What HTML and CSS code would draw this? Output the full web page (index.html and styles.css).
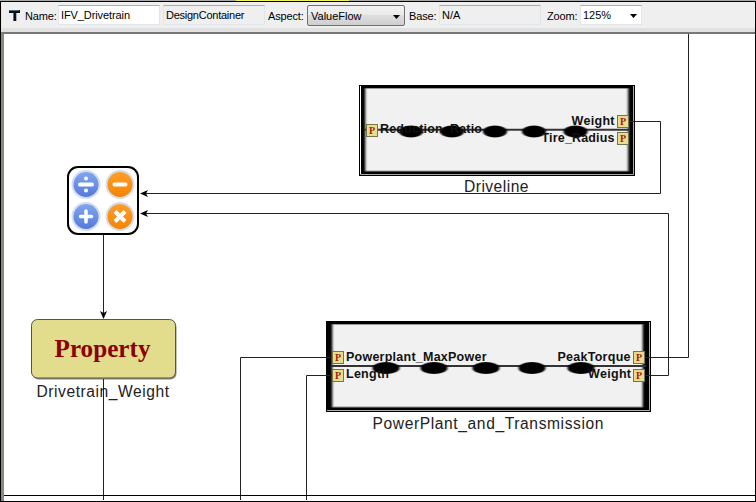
FILE: index.html
```html
<!DOCTYPE html>
<html lang="en">
<head>
<meta charset="utf-8">
<title>IFV_Drivetrain</title>
<link rel="stylesheet" href="styles.css">
</head>
<body>
<div class="tabstrip"><div class="tab-active"></div></div>
<div class="window">
  <header class="toolbar">
    <svg class="logo" width="13" height="13" viewBox="0 0 13 13"><path d="M1 1H12V4H8.300V12H5V4H1Z" fill="#071020"/><path d="M1 1.500H11" stroke="#477079"/><path d="M5.500 4V12" stroke="#59698a"/></svg>
    <span class="label label-name">Name:</span>
    <div class="field field-name"><span class="t-name">IFV_Drivetrain</span></div>
    <div class="field field-kind readonly"><span class="t-kind">DesignContainer</span></div>
    <span class="label label-aspect">Aspect:</span>
    <div class="select"><span class="t-flow">ValueFlow</span><i class="arrow"></i></div>
    <span class="label label-base">Base:</span>
    <div class="field field-base readonly"><span>N/A</span></div>
    <span class="label label-zoom">Zoom:</span>
    <div class="field field-zoom"><span>125%</span><i class="arrow"></i></div>
  </header>
  <main class="canvas">
    <svg class="diagram" width="751" height="466" viewBox="4 34 751 466">
      <defs>
        <filter id="soft" x="-10%" y="-30%" width="120%" height="160%"><feGaussianBlur stdDeviation="1.100 0.600"/></filter>
        <filter id="edge" x="-5%" y="-5%" width="110%" height="110%"><feGaussianBlur stdDeviation="1.200 0.500"/></filter>
        <linearGradient id="blue" x2="0" y2="1"><stop stop-color="#82a8ef"/><stop offset="1" stop-color="#5278dc"/></linearGradient>
        <linearGradient id="orange" x2="0" y2="1"><stop stop-color="#ffa02c"/><stop offset="1" stop-color="#f58200"/></linearGradient>
        <g id="port"><rect x=".5" y=".5" width="11" height="12" fill="#e5df8b" stroke="#77734d"/><text class="p" x="6" y="10.300">P</text></g>
      </defs>

      <rect x="359" y="85" width="276" height="91"/>
      <path d="M360.500 86V174.500H633.500V86" class="rim"/>
      <path d="M360.500 86V174" class="rim-light"/>
      <rect x="361" y="86" width="272" height="88"/>
      <rect x="365.500" y="88.500" width="262.500" height="82.500" class="panel" filter="url(#edge)"/>
      <path d="M364 129.700H630" class="shaft"/>
      <g filter="url(#soft)">
        <ellipse cx="411" cy="131.500" rx="12" ry="6"/><ellipse cx="452" cy="131.500" rx="12" ry="6"/><ellipse cx="495" cy="131.500" rx="12" ry="6"/><ellipse cx="534" cy="131.500" rx="12" ry="6"/><ellipse cx="575.500" cy="131.500" rx="12" ry="6"/>
      </g>
      <text class="pin" x="380" y="133" textLength="102">Reduction_Ratio</text>
      <text class="pin" x="571.500" y="125" textLength="43">Weight</text>
      <text class="pin" x="541.500" y="142" textLength="73">Tire_Radius</text>
      <text class="caption" x="464" y="192" textLength="64.500">Driveline</text>

      <rect x="326" y="321" width="325" height="91"/>
      <path d="M327 410.500H649.500V322" class="rim"/>
      <rect x="327" y="322" width="322" height="88"/>
      <rect x="332.500" y="324.500" width="310" height="82.500" class="panel" filter="url(#edge)"/>
      <path d="M331 366H646" class="shaft"/>
      <g filter="url(#soft)">
        <ellipse cx="386" cy="368" rx="13.500" ry="6"/><ellipse cx="434" cy="368" rx="13.500" ry="6"/><ellipse cx="486" cy="368" rx="13.500" ry="6"/><ellipse cx="532" cy="368" rx="13.500" ry="6"/><ellipse cx="581" cy="368" rx="13.500" ry="6"/>
      </g>
      <text class="pin" x="346" y="361" textLength="140.500">Powerplant_MaxPower</text>
      <text class="pin" x="346" y="378" textLength="43">Length</text>
      <text class="pin" x="557.500" y="361" textLength="73">PeakTorque</text>
      <text class="pin" x="588" y="378" textLength="43">Weight</text>
      <text class="caption" x="372.500" y="428.500" textLength="231">PowerPlant_and_Transmission</text>

      <rect x="68" y="167" width="70" height="67" rx="10" fill="#fff" stroke="#000" stroke-width="2"/>
      <g stroke="#d5dded">
        <circle cx="86" cy="184.500" r="13.500" fill="url(#blue)" stroke-width="2"/>
        <circle cx="86" cy="216.500" r="13.500" fill="url(#blue)" stroke-width="2"/>
        <circle cx="120" cy="184.500" r="13.500" fill="url(#orange)" stroke-width="2"/>
        <circle cx="120" cy="216.500" r="13.500" fill="url(#orange)" stroke-width="2"/>
      </g>
      <path d="M80 184.500H92M114.500 184.500H125.500" stroke="#fff" stroke-width="4" stroke-linecap="round"/>
      <circle cx="86" cy="178.500" r="2" fill="#fff"/><circle cx="86" cy="190.500" r="2" fill="#fff"/>
      <path d="M80.500 216.500H91.500M86 211V222" stroke="#fff" stroke-width="3.500" stroke-linecap="round"/>
      <path d="M115 211.500L125 221.500M125 211.500L115 221.500" stroke="#fff" stroke-width="4"/>

      <rect x="32.500" y="321" width="144" height="58.500" rx="6" fill="#8d8a73"/>
      <rect x="31.500" y="319.500" width="144" height="58.500" rx="6" fill="#e2dc8d" stroke="#555445"/>
      <text class="property" x="54.500" y="357" textLength="96" lengthAdjust="spacingAndGlyphs">Property</text>
      <text class="caption" x="36.500" y="397" textLength="132.500">Drivetrain_Weight</text>

      <g class="wire">
        <path d="M628 121.500H660.500V193.500H146"/>
        <path d="M644 375.500H668.500V213.500H146"/>
        <path d="M644 357.500H688.500V34"/>
        <path d="M332 357.500H240.500V500"/>
        <path d="M332 375.500H306.500V500"/>
        <path d="M103.500 235V313M103.500 379V500"/>
      </g>
      <path d="M140 193.500L148 190L146 193.500L148 197ZM140 213.500L148 210L146 213.500L148 217ZM103.500 319L100 311L103.500 313L107 311Z"/>
      <use href="#port" x="366" y="124"/><use href="#port" x="617" y="115"/><use href="#port" x="617" y="132"/>
      <use href="#port" x="332" y="351"/><use href="#port" x="332" y="369"/><use href="#port" x="633" y="351"/><use href="#port" x="633" y="369"/>
    </svg>
  </main>
</div>
</body>
</html>
```
FILE: styles.css
```css
* { box-sizing: border-box; }
body {
  margin: 0;
  width: 756px;
  height: 502px;
  overflow: hidden;
  background: #fff;
  color: #000;
  font: 11px/14px "Liberation Sans", sans-serif;
}
.tabstrip { height: 1px; padding-left: 236px; background: #aaa; }
.tab-active { width: 113px; height: 1px; background: #f4f45b; }
.window {
  height: 501px;
  border: 1px solid #000;
  display: flex;
  flex-direction: column;
}
.toolbar {
  display: flex;
  align-items: flex-start;
  height: 30px;
  padding: 3px 0 0 6px;
  background: #efefef;
  border-bottom: 4px solid #e1e1e1;
  border-left: 1px solid #eeee9b;
  white-space: nowrap;
}
.logo { margin-top: 4px; }
.label { margin-top: 4px; letter-spacing: -0.15px; }
.label-name { width: 31px; margin-left: 4px; }
.label-aspect { width: 36px; margin-left: 3px; }
.label-base { width: 28px; margin-left: 4px; }
.label-zoom { width: 31px; margin-left: 6px; }
.field {
  display: flex;
  justify-content: space-between;
  height: 20px;
  padding: 2px 2px 0;
  background: #fff;
  border: 1px solid #e0e4eb;
  border-top-color: #abadb3;
}
.field-name { width: 102px; margin-left: 2px; }
.field-kind { width: 102px; margin-left: 3px; }
.field-base { width: 102px; margin-left: 2px; }
.field-zoom { width: 62px; margin-left: 2px; padding-right: 4px; }
.t-name { letter-spacing: -0.1px; }
.t-kind { letter-spacing: -0.25px; }
.readonly { background: #efefef; }
.select {
  display: flex;
  justify-content: space-between;
  width: 98px;
  height: 21px;
  margin-left: 3px;
  padding: 3px 4px 0 3px;
  border: 1px solid #707070;
  border-radius: 2px;
  background: linear-gradient(#f2f2f2, #ebebeb 45%, #dddddd 50%, #cfcfcf);
}
.arrow {
  width: 7px;
  height: 4px;
  margin-top: 6px;
  background: #000;
  clip-path: polygon(0 0, 100% 0, 50% 100%);
}
.canvas {
  position: relative;
  flex: 1;
  border-top: 2px solid #777;
  border-left: 3px solid #8a897b;
  border-left-color: #8a8980;
  min-height: 0;
  overflow: hidden;
}
.canvas::after {
  content: "";
  position: absolute;
  left: 0;
  right: 0;
  top: 461px;
  height: 1px;
  background: #000;
}
.diagram { display: block; }
.rim { fill: none; stroke: #aaa; }
.rim-light { stroke: #fff; }
.panel { fill: #f1f1f1; stroke: #999; stroke-width: 1; }
.shaft { stroke: #333; stroke-width: 2; }
.wire { fill: none; stroke: #222; stroke-width: 1; }
.pin { font: bold 12.5px "Liberation Sans", sans-serif; fill: #111; }
.caption { font: 15.6px "Liberation Sans", sans-serif; fill: #222; }
.property { font: bold 25px "Liberation Serif", serif; fill: #8b0000; }
.p { font: bold 10px "Liberation Serif", serif; fill: #a81818; text-anchor: middle; }
```
